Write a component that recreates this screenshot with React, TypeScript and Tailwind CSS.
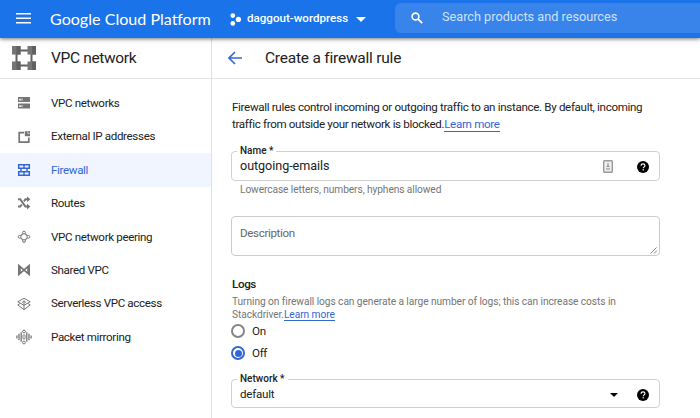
import type { ReactNode } from 'react';

const Help = () => (
  <svg className="h-3 w-3 shrink-0" viewBox="0 0 24 24">
    <circle cx="12" cy="12" r="12" fill="#000" />
    <path d="M8.2 9.4c0-2.2 1.6-3.8 3.9-3.8s3.8 1.5 3.8 3.5c0 2.6-3.4 2.7-3.4 5.6" fill="none" stroke="#fff" strokeWidth="2.3" />
    <rect x="11.2" y="16.3" width="2.5" height="2.5" fill="#fff" />
  </svg>
);

const Icon = ({ children }: { children: ReactNode }) => (
  <svg className="h-4 w-4 shrink-0" viewBox="0 0 16 16" fill="none" stroke="currentColor">
    {children}
  </svg>
);

const items: { label: string; icon: ReactNode }[] = [
  {
    label: 'VPC networks',
    icon: (
      <Icon>
        <path fill="currentColor" stroke="none" fillRule="evenodd" d="M2 2h12v5H2zM3.2 3.8v1.6h1.6V3.8zM2 8.6h12v5H2zM3.2 10.3v1.6h1.6v-1.6z" />
        <path stroke="#fff" strokeWidth=".8" d="M6 3.5v2.2M6 10v2.2" />
      </Icon>
    ),
  },
  {
    label: 'External IP addresses',
    icon: (
      <Icon>
        <path strokeWidth="1.7" d="M8 3.6H3.2v9.6h9.6V8.6" />
        <path fill="currentColor" stroke="none" d="M8.8 2.2H14v5H8.8z" />
        <path stroke="#fff" strokeWidth=".6" d="M11.8 2.6v1.9h1.9" />
      </Icon>
    ),
  },
  {
    label: 'Firewall',
    icon: (
      <Icon>
        <path strokeWidth="1.5" d="M2 2.8h12M2 6.2h12M2 9.8h12M2 13.2h12M2.7 2.5v4M8 2.5v4M13.3 2.5v4M5 6v4M11 6v4M2.7 9.8v3.6M8 9.8v3.6M13.3 9.8v3.6" />
      </Icon>
    ),
  },
  {
    label: 'Routes',
    icon: (
      <Icon>
        <path strokeWidth="2" d="M2 4.2h2.2l5.2 7.4H12M2 11.6h2.2l1.6-2.1M8 6.3l1.5-2.1H12" />
        <path fill="currentColor" stroke="none" d="M11 1.4l3.4 2.8L11 7zM11 8.8l3.4 2.8-3.4 2.8z" />
      </Icon>
    ),
  },
  {
    label: 'VPC network peering',
    icon: (
      <Icon>
        <circle cx="8" cy="3.6" r="1.4" />
        <circle cx="8" cy="12" r="1.4" />
        <circle cx="3.6" cy="7.8" r="1.4" />
        <circle cx="12.4" cy="7.8" r="1.4" />
        <path strokeWidth="1.2" d="M4.6 6.7l2.2-2M9.2 4.7l2.2 2M4.6 8.9l2.2 2M9.2 10.9l2.2-2" />
      </Icon>
    ),
  },
  {
    label: 'Shared VPC',
    icon: (
      <Icon>
        <path strokeWidth="1.7" d="M2.9 3.6v8.8L13.1 3.6v8.8z" />
        <path fill="currentColor" stroke="none" d="M2 3l2.8 2.2v5.6L2 13zM14 3l-2.8 2.2v5.6L14 13z" />
      </Icon>
    ),
  },
  {
    label: 'Serverless VPC access',
    icon: (
      <Icon>
        <path d="M8 2.3L1.8 5.8 8 9.3l6.2-3.5zM3.8 7.6l-2 1.3L8 13.7l6.2-4.8-2-1.3M8 5v8.2M5.8 6.8L8 4.8l2.2 2" />
      </Icon>
    ),
  },
  {
    label: 'Packet mirroring',
    icon: (
      <Icon>
        <path strokeWidth="1.3" d="M.9 6.6v2.8M3 4.8v6.4M5.2 3.2v9.6M10.8 3.2v9.6M13 4.8v6.4M15.1 6.6v2.8" />
        <rect x="7" y="5.8" width="2" height="4.4" rx=".9" strokeWidth=".9" />
        <circle cx="8" cy="2.5" r="1.4" />
        <circle cx="8" cy="13.5" r="1.4" />
      </Icon>
    ),
  },
];

const Learn = () => (
  <a className="border-b border-[#3367d6] text-[#3367d6]">Learn more</a>
);

export default function App() {
  return (
    <div className="flex h-[418px] w-[700px] flex-col overflow-hidden bg-white font-['Roboto',sans-serif] text-[11.6px] tracking-[-0.35px] whitespace-nowrap text-[#212121]">
      <header className="z-10 flex h-[38px] shrink-0 items-center bg-[#1a73e8] tracking-normal text-white shadow-[0_1px_4px_rgba(0,0,0,0.55)]">
        <svg className="ml-4 h-4 w-[15px] shrink-0" viewBox="0 0 15 16">
          <path d="M0 2.7h15M0 7.2h15M0 11.7h15" stroke="#fff" strokeWidth="1.4" />
        </svg>
        <div className="ml-[19px] w-[180px] pb-px font-['Lato',sans-serif] text-[16.1px] leading-5">Google Cloud Platform</div>
        <svg className="h-[13px] w-[11px] shrink-0" viewBox="0 0 11 13" fill="#fff">
          <circle cx="2.8" cy="2.6" r="2.4" />
          <circle cx="8.4" cy="6.4" r="2.6" />
          <circle cx="2.8" cy="10.4" r="2.4" />
        </svg>
        <div className="ml-[6px] w-[109px] text-[11.6px] font-medium">daggout-wordpress</div>
        <svg className="h-[5px] w-[10px] shrink-0" viewBox="0 0 10 5">
          <path d="M0 0h10L5 5z" fill="#fff" />
        </svg>
        <div className="mt-[3px] ml-[29px] flex h-[30px] flex-1 items-center self-start rounded-l-md bg-[#3884eb]">
          <svg className="ml-4 h-3 w-3 shrink-0" viewBox="0 0 12 12" fill="none" stroke="#fff">
            <circle cx="4.5" cy="4.5" r="3.4" strokeWidth="1.6" />
            <path d="M7.1 7.1l4.1 4.1" strokeWidth="1.9" />
          </svg>
          <div className="ml-[19px] pb-[2px] text-[12.7px] text-[#cfe1fa]">Search products and resources</div>
        </div>
      </header>
      <div className="flex min-h-0 flex-1">
        <aside className="w-[212px] shrink-0 border-r border-[#e0e0e0]">
          <div className="flex h-[41px] items-center border-b border-[#e5e5e5] pl-3">
            <svg className="h-6 w-6 shrink-0" viewBox="0 0 24 24">
              <path d="M4.5 4v16M19.5 4v16M8 4.5h8M8 19.5h8" stroke="#616161" strokeWidth="2" fill="none" />
              <path d="M0 0h8.5v8.5H0zM15.5 0H24v8.5h-8.5zM0 15.5h8.5V24H0zM15.5 15.5H24V24h-8.5z" fill="#757575" />
              <path d="M4.5 0h4v8.5h-4zM20 0h4v8.5h-4zM4.5 15.5h4V24h-4zM20 15.5h4V24h-4z" fill="#616161" />
            </svg>
            <h1 className="ml-[15px] text-[15.5px] leading-5">VPC network</h1>
          </div>
          <nav className="pt-[7.6px]">
            {items.map((item) => (
              <div
                key={item.label}
                className={`flex h-[33.4px] items-center gap-[19px] pl-4 ${item.label === 'Firewall' ? 'bg-[#f0f5ff] text-[#3367d6]' : 'text-[#757575]'}`}
              >
                {item.icon}
                <span className={item.label === 'Firewall' ? 'pt-px' : 'pt-px text-[#212121]'}>{item.label}</span>
              </div>
            ))}
          </nav>
        </aside>
        <main className="min-w-0 flex-1">
          <div className="flex h-[41px] items-center border-b border-[#e5e5e5] pl-4">
            <svg className="h-[14px] w-[14px] shrink-0" viewBox="0 0 14 14" fill="none" stroke="#3367d6" strokeWidth="1.6">
              <path d="M14 7H1.2M7 1L1 7l6 6" />
            </svg>
            <h2 className="ml-[23px] text-[15.5px] leading-5 tracking-[-0.22px]">Create a firewall rule</h2>
          </div>
          <div className="pt-5 pl-[19px]">
            <p className="pl-px leading-[17px] tracking-[-0.33px]">
              Firewall rules control incoming or outgoing traffic to an instance. By default, incoming
              <br />
              traffic from outside your network is blocked.<Learn />
            </p>
            <fieldset className="mt-[13px] h-[34.5px] w-[429px] rounded-[4px] border border-[#d0d0d0]">
              <legend className="ml-[5px] px-[3px] text-[10px] leading-[10px] font-medium tracking-normal">Name *</legend>
              <div className="flex h-[21px] items-center pr-[10px] pl-2">
                <span className="flex-1 text-[12.6px] tracking-[-0.05px]">outgoing-emails</span>
                <svg className="mr-[24px] h-[13px] w-[10px]" viewBox="0 0 10 13">
                  <rect x=".7" y=".7" width="8.6" height="11.6" rx=".8" fill="#eee" stroke="#999" strokeWidth="1.4" />
                  <path d="M5 3v4M3.5 6.5h3M3 9h4" stroke="#888" />
                </svg>
                <Help />
              </div>
            </fieldset>
            <p className="mt-[3.5px] pl-[9px] text-[10.2px] leading-3 tracking-[-0.09px] text-[#757575]">Lowercase letters, numbers, hyphens allowed</p>
            <div className="mt-5 flex h-[40px] w-[429px] rounded-[4px] border border-[#cccccc] pt-[7px] pl-2 text-[#666]">
              <span className="flex-1 pt-px leading-4">Description</span>
              <svg className="mr-px mb-px h-[7px] w-[8px] self-end" viewBox="0 0 8 7" fill="none" stroke="#777" strokeWidth=".9">
                <path d="M.5 6.5l6-6M4 6.5l3-3" />
              </svg>
            </div>
            <h3 className="mt-5 pl-px leading-4 font-medium">Logs</h3>
            <p className="mt-1 pl-px text-[10.2px] leading-[12.5px] tracking-[-0.07px] text-[#757575]">
              Turning on firewall logs can generate a large number of logs; this can increase costs in
              <br />
              Stackdriver.<Learn />
            </p>
            <div className="-mt-px flex h-[22px] items-center gap-[7px]">
              <span className="h-[14px] w-[14px] rounded-full border-2 border-[#858585]" />
              <span className="pt-px">On</span>
            </div>
            <div className="flex h-[22px] items-center gap-[7px]">
              <span className="flex h-[14px] w-[14px] items-center justify-center rounded-full border-2 border-[#3367d6]">
                <span className="h-[7px] w-[7px] rounded-full bg-[#3367d6]" />
              </span>
              <span className="pt-px">Off</span>
            </div>
            <fieldset className="mt-[10px] h-[34px] w-[429px] rounded-[4px] border border-[#d0d0d0]">
              <legend className="ml-[5px] px-[3px] text-[10px] leading-[10px] font-medium tracking-normal">Network *</legend>
              <div className="flex h-[21px] items-center pr-[10px] pl-2">
                <span className="flex-1 tracking-[-0.25px]">default</span>
                <svg className="mr-[19px] h-1 w-2" viewBox="0 0 8 4">
                  <path d="M0 0h8L4 4z" fill="#000" />
                </svg>
                <Help />
              </div>
            </fieldset>
          </div>
        </main>
      </div>
    </div>
  );
}
